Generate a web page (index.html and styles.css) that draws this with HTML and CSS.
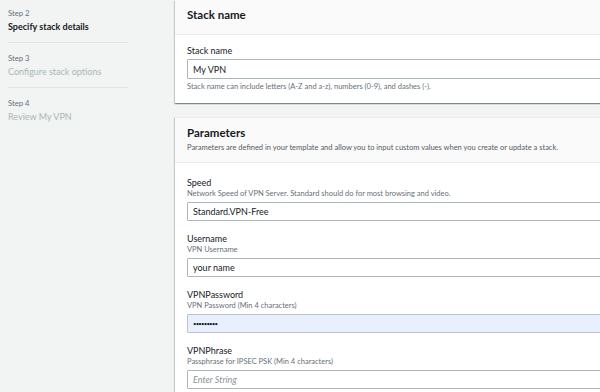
FILE: index.html
```html
<!DOCTYPE html>
<html>
<head>
<meta charset="utf-8">
<link rel="stylesheet" href="styles.css">
</head>
<body>
<div class="page">
  <nav class="steps">
    <div class="step">
      <div class="step-num">Step 2</div>
      <div class="step-title current">Specify stack details</div>
    </div>
    <div class="step">
      <div class="step-num">Step 3</div>
      <div class="step-title">Configure stack options</div>
    </div>
    <div class="step last">
      <div class="step-num">Step 4</div>
      <div class="step-title">Review My VPN</div>
    </div>
  </nav>
  <main class="main">
    <section class="card card-first">
      <header class="card-head">
        <h2>Stack name</h2>
      </header>
      <div class="card-body body-short">
        <div class="field">
          <div class="label">Stack name</div>
          <div class="input"><span>My VPN</span></div>
          <div class="hint">Stack name can include letters (A-Z and a-z), numbers (0-9), and dashes (-).</div>
        </div>
      </div>
    </section>
    <section class="card">
      <header class="card-head head-tall">
        <h2>Parameters</h2>
        <p class="head-desc">Parameters are defined in your template and allow you to input custom values when you create or update a stack.</p>
      </header>
      <div class="card-body">
        <div class="field">
          <div class="label">Speed</div>
          <div class="desc">Network Speed of VPN Server. Standard should do for most browsing and video.</div>
          <div class="input"><span>Standard.VPN-Free</span></div>
        </div>
        <div class="field">
          <div class="label">Username</div>
          <div class="desc">VPN Username</div>
          <div class="input"><span>your name</span></div>
        </div>
        <div class="field">
          <div class="label">VPNPassword</div>
          <div class="desc">VPN Password (Min 4 characters)</div>
          <div class="input autofill"><span class="dots">•••••••••</span></div>
        </div>
        <div class="field">
          <div class="label">VPNPhrase</div>
          <div class="desc">Passphrase for IPSEC PSK (Min 4 characters)</div>
          <div class="input"><span class="placeholder">Enter String</span></div>
        </div>
      </div>
    </section>
  </main>
</div>
</body>
</html>
```

FILE: styles.css
```css
html, body {
  margin: 0;
  padding: 0;
}
body {
  width: 600px;
  height: 392px;
  overflow: hidden;
  background: #f2f3f3;
  font-family: Lato, "Liberation Sans", sans-serif;
  color: #16191f;
}
.page {
  display: flex;
  align-items: flex-start;
}
.steps {
  width: 175px;
  flex: none;
  padding: 7px 0 0 8px;
  box-sizing: border-box;
}
.step {
  width: 120px;
  padding-bottom: 8px;
  margin-bottom: 9px;
  border-bottom: 1px solid #e1e4e4;
}
.step.last {
  border-bottom: none;
}
.step-num {
  font-size: 7.7px;
  line-height: 12px;
  color: #687078;
}
.step-title {
  font-size: 9px;
  line-height: 15px;
  color: #aab7b8;
}
.step-title.current {
  font-weight: 700;
  color: #16191f;
}
.main {
  width: 460px;
  flex: none;
}
.card {
  background: #fff;
  box-shadow: 0 1px 1px 0 rgba(0, 28, 36, 0.3), 1px 1px 1px 0 rgba(0, 28, 36, 0.15), -1px 1px 1px 0 rgba(0, 28, 36, 0.15);
  border-top: 1px solid #eaeded;
  margin-bottom: 14px;
}
.card-first {
  border-top: none;
}
.card-head {
  background: #fafafa;
  border-bottom: 1px solid #eaeded;
  padding: 7px 12px 0;
  height: 27px;
}
.card-head.head-tall {
  height: 29px;
  padding-top: 7px;
  padding-bottom: 8px;
}
h2 {
  margin: 0;
  font-size: 11.5px;
  line-height: 16px;
  font-weight: 700;
}
.head-desc {
  margin: 1px 0 0;
  font-size: 7.5px;
  line-height: 12px;
  color: #545b64;
}
.card-body {
  padding: 14px 12px 4px;
}
.card-body.body-short {
  padding: 10px 12px 10px;
}
.field {
  margin-bottom: 12px;
}
.body-short .field {
  margin-bottom: 0;
}
.label {
  font-size: 9px;
  line-height: 12px;
  color: #16191f;
}
.body-short .label {
  margin-bottom: 2px;
}
.desc {
  font-size: 7.5px;
  line-height: 10px;
  color: #687078;
  margin-bottom: 3px;
}
.hint {
  font-size: 7.5px;
  line-height: 12px;
  margin-top: 2px;
  color: #687078;
}
.input {
  height: 17px;
  border: 1px solid #aab7b8;
  border-radius: 1px;
  padding: 0 5px;
  display: flex;
  align-items: center;
  font-size: 9px;
  color: #16191f;
  background: #fff;
}
.body-short .input {
  height: 18px;
}
.input.autofill {
  background: #e8f0fe;
  border-color: #b6c4cf;
}
.dots {
  font-size: 6px;
  letter-spacing: -0.8px;
}
.placeholder {
  font-style: italic;
  color: #879596;
}
```
